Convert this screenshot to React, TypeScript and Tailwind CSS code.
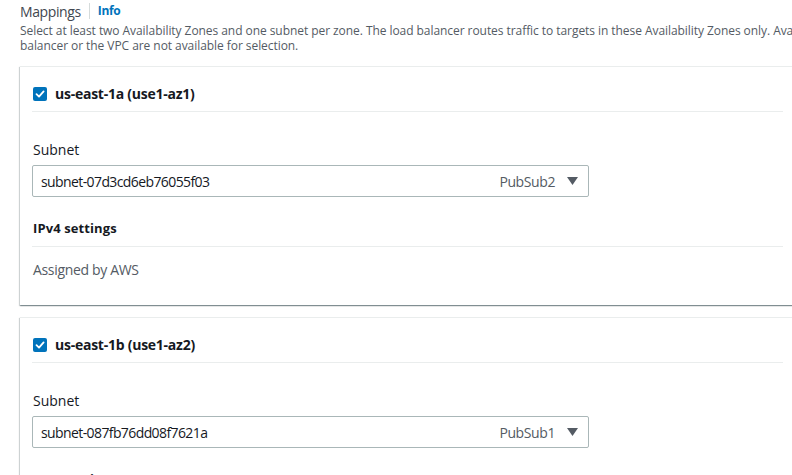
import React from "react";

const font = { fontFamily: '"Open Sans", "Noto Sans", Arial, sans-serif' };

function Check() {
  return (
    <span className="flex h-[14px] w-[14px] items-center justify-center rounded-[2px] bg-[#0073bb]">
      <svg width="10" height="10" viewBox="0 0 10 10">
        <path d="M1.5 5.2 L4 7.6 L8.6 2.4" fill="none" stroke="#fff" strokeWidth="1.8" strokeLinecap="round" strokeLinejoin="round" />
      </svg>
    </span>
  );
}

function Card({ zone, subnet, name }: { zone: string; subnet: string; name: string }) {
  return (
    <div className="w-[775px] border-t border-[#eaeded] bg-white px-3 shadow-[0_1px_1px_0_rgba(0,28,36,0.3),1px_1px_1px_0_rgba(0,28,36,0.15),-1px_1px_1px_0_rgba(0,28,36,0.15)]">
      <div className="flex h-[45px] items-center gap-2 border-b border-[#eaeded] pt-[9px] pl-[1px]">
        <Check />
        <span className="text-[14px] font-bold tracking-[-0.25px] text-[#16191f]">{zone}</span>
      </div>
      <div className="pt-[28px] pl-[1px] text-[14px] leading-[20px] text-[#16191f]">Subnet</div>
      <div className="mt-[5px] flex h-[32px] w-[557px] items-center rounded-[2px] border border-[#aab7b8] pl-2 pr-[10px] text-[14px] text-[#16191f]">
        <span className="flex-1 tracking-[-0.6px]">{subnet}</span>
        <span className="tracking-[-0.4px] text-[#545b64]">{name}</span>
        <svg className="ml-3" width="11" height="8" viewBox="0 0 11 8">
          <path d="M0 0 H11 L5.5 8 Z" fill="#545b64" />
        </svg>
      </div>
      <div className="mt-[21px] border-b border-[#eaeded] pb-[8px] pl-[1px] text-[13px] font-bold leading-[20px] tracking-[0.1px] text-[#16191f]">
        IPv4 settings
      </div>
      <div className="pt-[13px] pb-[25px] pl-[1px] text-[14px] leading-[20px] tracking-[-0.33px] text-[#545b64]">Assigned by AWS</div>
    </div>
  );
}

export default function App() {
  return (
    <div className="h-[475px] w-[792px] overflow-hidden bg-white" style={font}>
      <div className="w-[800px] pl-5">
        <div className="flex h-[22px] items-center">
          <span className="text-[14px] tracking-[-0.4px] text-[#414750]">Mappings</span>
          <span className="mx-[8px] h-[16px] w-px bg-[#d5dbdb]" />
          <span className="text-[12px] font-bold tracking-[-0.3px] text-[#0073bb]">Info</span>
        </div>
        <div className="whitespace-nowrap text-[12px] leading-[15px] tracking-[-0.06px] text-[#545b64]">
          <div className="pt-[1px]">Select at least two Availability Zones and one subnet per zone. The load balancer routes traffic to targets in these Availability Zones only. Availability Zones that are not supported by the load</div>
          <div>balancer or the VPC are not available for selection.</div>
        </div>
        <div className="mt-[13px] flex flex-col gap-3">
          <Card zone="us-east-1a (use1-az1)" subnet="subnet-07d3cd6eb76055f03" name="PubSub2" />
          <Card zone="us-east-1b (use1-az2)" subnet="subnet-087fb76dd08f7621a" name="PubSub1" />
        </div>
      </div>
    </div>
  );
}
